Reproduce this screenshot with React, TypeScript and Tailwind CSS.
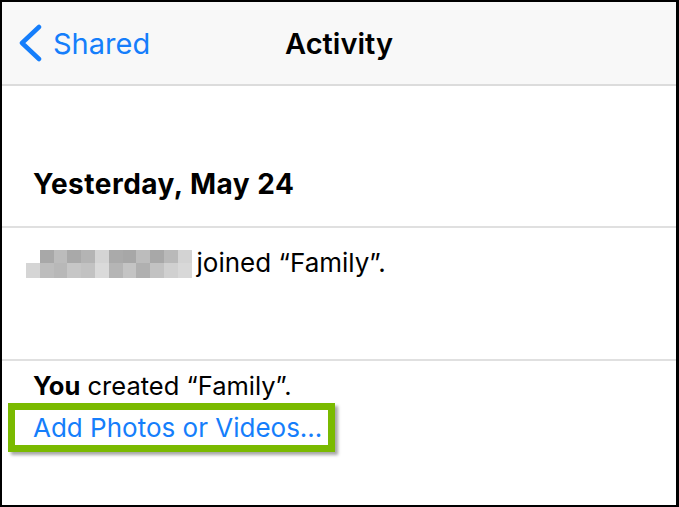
const topRow = [
  'bg-[#a8a8a8]', 'bg-[#bcbcbc]', 'bg-[#a9a9a9]', 'bg-[#b4b4b4]', 'bg-[#d4d4d4]', 'bg-[#aaaaaa]',
  'bg-[#a7a7a7]', 'bg-[#bcbcbc]', 'bg-[#a8a8a8]', 'bg-[#b9b9b9]', 'bg-[#d3d3d3]',
];
const bottomRow = [
  'bg-[#d5d5d5]', 'bg-[#bdbdbd]', 'bg-[#b8b8b8]', 'bg-[#c6c6c6]', 'bg-[#c2c2c2]', 'bg-[#dadada]',
  'bg-[#b5b5b5]', 'bg-[#c4c4c4]', 'bg-[#b0b0b0]', 'bg-[#c2c2c2]', 'bg-[#d0d0d0]', 'bg-[#d8d8d8]',
];

const BlurredName = () => (
  <div className="flex flex-col items-end">
    <div className="flex">
      {topRow.map((c, i) => (
        <div key={i} className={`w-[13.8px] h-[13px] ${c}`} />
      ))}
    </div>
    <div className="flex">
      {bottomRow.map((c, i) => (
        <div key={i} className={`w-[13.8px] h-[15px] ${c}`} />
      ))}
    </div>
  </div>
);

export default function App() {
  return (
    <div className="w-[679px] h-[507px] box-border border-black border-l-2 border-t-2 border-r-[3px] border-b-2 bg-white font-['Inter',sans-serif] text-black overflow-hidden flex flex-col">
      {/* Nav bar */}
      <div className="h-[84px] shrink-0 bg-[#f8f8f8] border-b-2 border-[#dcdcdc] grid grid-cols-[1fr_auto_1fr] items-center">
        <div className="flex items-center pl-[16px] text-[#157efb]">
          <svg width="26" height="38" viewBox="0 0 26 38">
            <path d="M21 3 L4 19 L21 35" fill="none" stroke="currentColor" strokeWidth="4.5" strokeLinecap="round" strokeLinejoin="round" />
          </svg>
          <span className="ml-[9px] mt-[1px] text-[29px] leading-none">Shared</span>
        </div>
        <div className="mt-[1px] text-[29px] font-semibold leading-none">Activity</div>
        <div />
      </div>

      {/* Date header */}
      <div className="h-[140px] shrink-0 flex items-end pb-[26px] pl-[31px]">
        <div className="text-[28px] font-bold leading-[32px] tracking-[0.5px]">Yesterday, May 24</div>
      </div>
      <div className="h-[2px] shrink-0 bg-[#e0e0e0]" />

      {/* Joined row */}
      <div className="h-[131px] shrink-0 pt-[22px] pl-[24px] flex items-start">
        <BlurredName />
        <span className="ml-[5px] -mt-[2px] text-[26px] leading-[30px]">joined “Family”.</span>
      </div>
      <div className="h-[2px] shrink-0 bg-[#e0e0e0]" />

      {/* Created row */}
      <div className="pl-[31px] pt-[9px]">
        <div className="text-[25.5px] leading-[32px]">
          <span className="font-bold">You</span> created “Family”.
        </div>
        <div className="-ml-[25px] mt-[1px] w-[327px] h-[49px] box-border border-[7px] border-[#7aba00] bg-white shadow-[3px_3px_3px_rgba(0,0,0,0.35)] flex items-center pl-[18px]">
          <span className="text-[26px] leading-none text-[#157efb]">Add Photos or Videos...</span>
        </div>
      </div>
    </div>
  );
}
